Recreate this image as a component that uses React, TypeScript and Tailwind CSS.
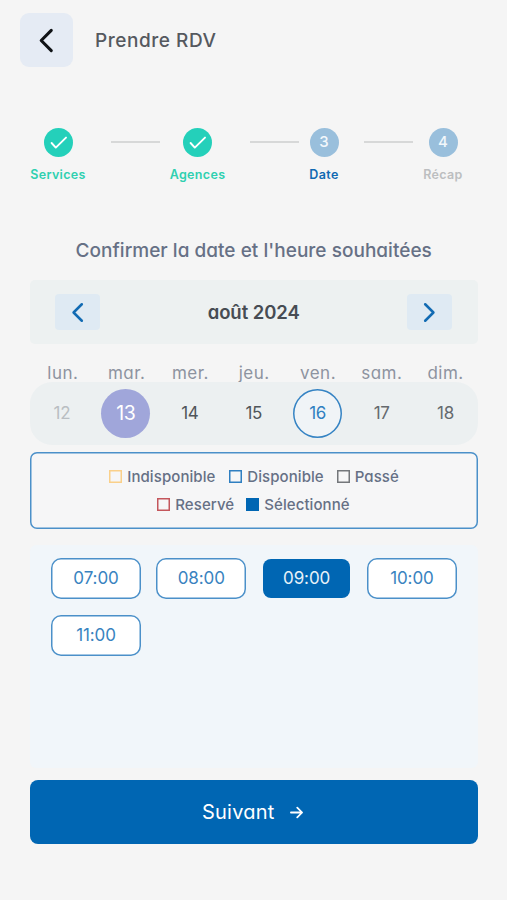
import React from "react";

function Chevron({ dir, weight, className }: { dir: "left" | "right"; weight: number; className: string }) {
  return (
    <svg viewBox="0 0 14 24" fill="none" stroke="currentColor" strokeWidth={weight} strokeLinecap="round" strokeLinejoin="round" className={`overflow-visible ${className}`}>
      <path d={dir === "left" ? "M12.5 1.5 2 12l10.5 10.5" : "M1.5 1.5 12 12 1.5 22.5"} />
    </svg>
  );
}

function Check() {
  return (
    <svg viewBox="0 0 29 29" fill="none" stroke="white" strokeWidth="1.9" strokeLinecap="round" strokeLinejoin="round" className="size-[29px]">
      <path d="m7.6 15 4.2 4.6L22 9.6" />
    </svg>
  );
}

const steps = [
  { label: "Services", width: "w-14", color: "text-[#2fd0b0]", circle: "bg-[#24d0ba]" },
  { label: "Agences", width: "w-[55px]", color: "text-[#2fd0b0]", circle: "bg-[#24d0ba]" },
  { label: "Date", width: "w-[30px]", color: "text-[#1069b2]", circle: "bg-[#99bfdc]", n: "3" },
  { label: "Récap", width: "w-10", color: "text-[#bcbec0]", circle: "bg-[#99bfdc]", n: "4" },
];

const days = [
  { name: "lun.", n: "12", style: "text-[#b9bec2] text-[17px]" },
  { name: "mar.", n: "13", style: "bg-[#a0a6da] text-white text-[19.5px]" },
  { name: "mer.", n: "14", style: "text-[#50555a] text-[17px]" },
  { name: "jeu.", n: "15", style: "text-[#50555a] text-[17px]" },
  { name: "ven.", n: "16", style: "shadow-[inset_0_0_0_1.5px_#3583c3] bg-[#f0f4f7] text-[#2f7fc1] text-[17px]" },
  { name: "sam.", n: "17", style: "text-[#656a6e] text-[17px]" },
  { name: "dim.", n: "18", style: "text-[#656a6e] text-[17px]" },
];

const legend = [
  [
    { label: "Indisponible", width: "w-[89.5px]", box: "shadow-[inset_0_0_0_1.5px_#fad08a]" },
    { label: "Disponible", width: "w-[77px]", box: "shadow-[inset_0_0_0_1.5px_#2f7fc1]" },
    { label: "Passé", width: "w-[43.5px]", box: "shadow-[inset_0_0_0_1.5px_#74777b]" },
  ],
  [
    { label: "Reservé", width: "w-[58.5px]", box: "shadow-[inset_0_0_0_1.5px_#c4565c]" },
    { label: "Sélectionné", width: "w-[86px]", box: "bg-[#0066b3]" },
  ],
];

const slots = ["07:00", "08:00", "09:00", "10:00", "11:00"];

export default function App() {
  return (
    <div className="h-[900px] w-[507px] overflow-hidden bg-[#f5f5f5] font-['Inter','Liberation_Sans',sans-serif] whitespace-nowrap [font-feature-settings:'cv11']">
      <header className="flex h-[67px] items-end pl-5">
        <button className="flex h-[54px] w-[53px] items-center justify-center rounded-[9px] bg-[#e5ebf4] pr-[2px] text-[#101316]">
          <Chevron dir="left" weight={3.2} className="h-[23px] w-[14px]" />
        </button>
        <h1 className="ml-[22px] flex h-[54px] items-center pt-[2px] text-[19px] font-medium tracking-[0.55px] text-[#55595f]">Prendre RDV</h1>
      </header>

      <div className="mt-[61px] flex h-[60px] pl-[30px]">
        {steps.map((s, i) => (
          <React.Fragment key={s.label}>
            {i > 0 && <div className="mt-[13px] mr-[10px] ml-[25px] h-[2px] w-[49px] bg-[#d7d8d8]" />}
            <div className={`flex flex-col items-center ${s.width}`}>
              <div className={`flex size-[29px] items-center justify-center rounded-full text-[15px] font-medium text-[#f2f7fb] ${s.circle}`}>
                {s.n ?? <Check />}
              </div>
              <span className={`mt-[9px] text-[12.5px] leading-[18px] font-semibold tracking-[0.35px] [font-feature-settings:normal] ${s.color}`}>{s.label}</span>
            </div>
          </React.Fragment>
        ))}
      </div>

      <main className="flex flex-col pr-[29.5px] pl-[30px]">
        <h2 className="mt-[47px] flex h-[30px] items-center justify-center pt-[2px] text-[19px] font-medium tracking-[0.03px] text-[#667085]">
          Confirmer la date et l'heure souhaitées
        </h2>
        <div className="mt-[15px] flex h-16 items-center justify-between rounded-[5px] bg-[#edf1f1] px-[25px]">
          <button className="flex h-9 w-[45px] items-center justify-center rounded-[4px] bg-[#dfeaf3] text-[#126bb3]">
            <Chevron dir="left" weight={3.2} className="h-[19px] w-[11px]" />
          </button>
          <span className="pt-[2px] text-[18.5px] font-semibold tracking-[-0.05px] text-[#474c53]">août 2024</span>
          <button className="flex h-9 w-[45px] items-center justify-center rounded-[4px] bg-[#dfeaf3] text-[#126bb3]">
            <Chevron dir="right" weight={3.2} className="h-[19px] w-[11px]" />
          </button>
        </div>

        <div className="mt-4 grid h-[22px] grid-cols-7 pl-px text-center text-[17px] leading-[26px] tracking-[0.5px] text-[#8d93a0]">
          {days.map((d) => <span key={d.name}>{d.name}</span>)}
        </div>
        <div className="grid h-[63px] grid-cols-7 items-center justify-items-center rounded-[22px] bg-[#ecf0f1]">
          {days.map((d) => (
            <div key={d.n} className={`flex size-[49px] items-center justify-center rounded-full pt-px tracking-[-0.3px] ${d.style}`}>{d.n}</div>
          ))}
        </div>

        <div className="mt-[7px] flex h-[77px] flex-col items-center justify-center rounded-[7px] bg-[#f6f6f7] shadow-[inset_0_0_0_1.5px_#4b90c9]">
          {legend.map((row, r) => (
            <div key={r} className="flex h-7 items-center gap-[12.5px]">
              {row.map((l) => (
                <div key={l.label} className="flex items-center gap-[5px]">
                  <span className={`size-[13px] ${l.box}`} />
                  <span className={`text-[15px] leading-5 font-medium tracking-[0.08px] text-[#667085] ${l.width}`}>{l.label}</span>
                </div>
              ))}
            </div>
          ))}
        </div>

        <div className="mt-4 grid h-[223px] grid-cols-[repeat(4,90px)] content-start gap-x-[15.3px] gap-y-4 rounded-md bg-[#f1f6fa] pt-[13px] pl-[21px]">
          {slots.map((s) => (
            <button
              key={s}
              className={
                s === "09:00"
                  ? "mx-[1.5px] my-px flex h-[39px] items-center justify-center rounded-[8px] bg-[#0066b3] text-[17px] tracking-[-0.1px] text-[#e7f1f8]"
                  : "flex h-[41px] items-center justify-center rounded-[10px] bg-white text-[17px] tracking-[-0.1px] text-[#3983c0] shadow-[inset_0_0_0_1.5px_#4b90c9]"
              }
            >
              {s}
            </button>
          ))}
        </div>

        <button className="mt-3 flex h-16 items-center justify-center rounded-[8px] bg-[#0066b3] pr-[2px] text-white">
          <span className="text-[20px] tracking-[0.2px]">Suivant</span>
          <svg viewBox="0 0 14 14" fill="none" stroke="currentColor" strokeWidth="1.9" strokeLinecap="round" strokeLinejoin="round" className="ml-4 size-[13px]">
            <path d="M1 7h12M7.8 1.7 13 7l-5.2 5.3" />
          </svg>
        </button>
      </main>
    </div>
  );
}
